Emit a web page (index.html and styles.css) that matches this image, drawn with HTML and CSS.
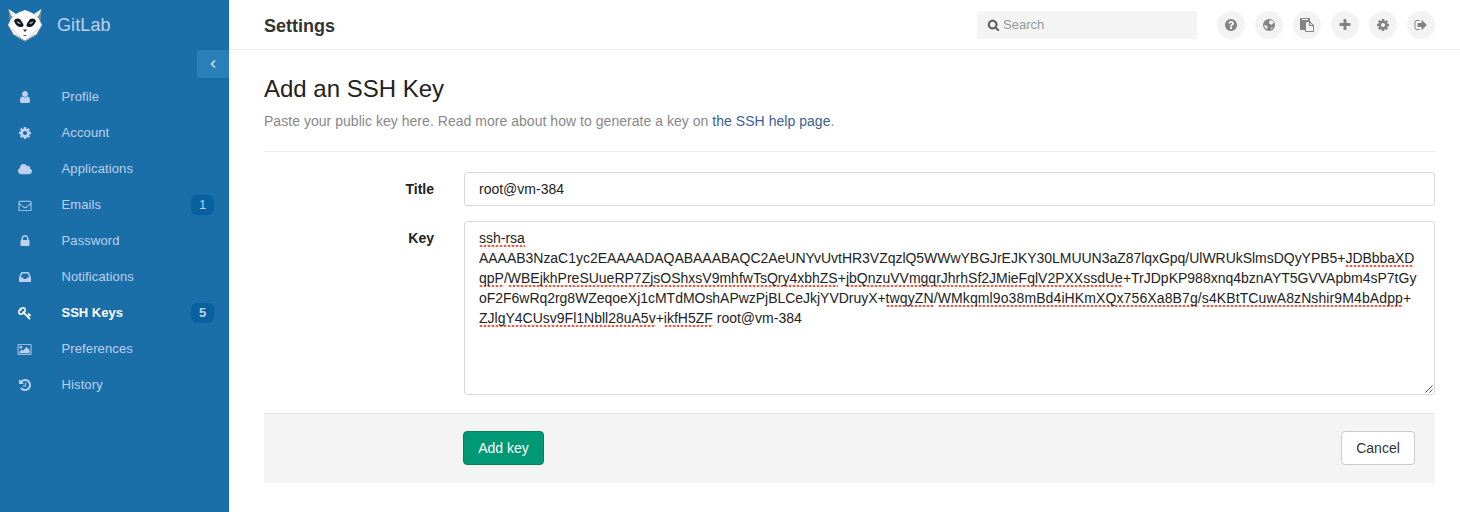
FILE: index.html
```html
<!DOCTYPE html>
<html lang="en">
<head>
<meta charset="utf-8">
<title>Add an SSH Key</title>
<link rel="stylesheet" href="styles.css">
</head>
<body>
<div class="app">
<aside class="sidebar">
  <div class="brand">
    <svg class="logo" viewBox="0 0 36 34"><path d="M1.500 1 8 6 4.500 11 2.500 13ZM34.500 1 28 6 31.500 11 33.500 13Z" fill="#7c8990"/><path d="M1.500 1 9 6 5.500 9 4 7ZM34.500 1 27 6 30.500 9 32 7Z" fill="#f4f6f7"/><path d="M18 2Q12 4 8 6.500L4 11 1 17 6 26.500 18 33.500 30 26.500 35 17 32 11 28 6.500Q24 4 18 2Z" fill="#fff"/><path d="M1 17.500 6.500 26.500 18 33 29.500 26.500 35 17.500" fill="none" stroke="#69777f" stroke-width=".9"/><path d="M5 21 10 25.500 15 31.500M31 21 26 25.500 21 31.500" fill="none" stroke="#aab3b8" stroke-width=".7"/><path d="M7 13q1.500-3.500 6-2l3 4.500q1.500 3-1.500 3.500-5 .5-7.500-6ZM29 13q-1.500-3.500-6-2l-3 4.500q-1.500 3 1.500 3.500 5 .5 7.500-6Z" fill="#14191d"/><path d="M9.500 13.500q3-.5 4.500 2.500-3 .5-4.500-2.500ZM26.500 13.500q-3-.5-4.500 2.500 3 .5 4.500-2.500Z" fill="#a7b1b6"/><path d="M16 21.500h4L18 24Z" fill="#252a2e"/><path d="M16.500 27h3v1h-3Z" fill="#555"/></svg>
    <span>GitLab</span>
  </div>
  <div class="collapse"><svg viewBox="0 0 8 10"><path d="M6 1.500 2.500 5l3.500 3.500" fill="none" stroke="#dce9f3" stroke-width="1.500"/></svg></div>
  <nav class="nav">
    <a class="item"><svg class="ico" viewBox="0 0 1792 1792"><path d="M1536 1399q0 109-62.500 187t-150.500 78h-854q-88 0-150.500-78t-62.500-187q0-85 8.500-160.500t31.500-152 58.500-131 94-89 134.500-34.500q131 128 313 128t313-128q76 0 134.500 34.500t94 89 58.500 131 31.500 152 8.500 160.500zm-256-887q0 159-112.500 271.500t-271.500 112.500-271.500-112.500-112.500-271.500 112.500-271.500 271.500-112.500 271.500 112.500 112.500 271.500z"/></svg><span>Profile</span></a>
    <a class="item"><svg class="ico" viewBox="0 0 1792 1792"><path id="cog" d="M1152 896q0-106-75-181t-181-75-181 75-75 181 75 181 181 75 181-75 75-181zm512-109v222q0 12-8 23t-20 13l-185 28q-19 54-39 91 35 50 107 138 10 12 10 25t-9 23q-27 37-99 108t-94 71q-12 0-26-9l-138-108q-44 23-91 38-16 136-29 186-7 28-36 28h-222q-14 0-24.500-8.500t-11.500-21.500l-28-184q-49-16-90-37l-141 107q-10 9-25 9-14 0-25-11-126-114-165-168-7-10-7-23 0-12 8-23 15-21 51-66.500t54-70.500q-27-50-41-99l-183-27q-13-2-21-12.500t-8-23.500v-222q0-12 8-23t19-13l186-28q14-46 39-92-40-57-107-138-10-12-10-24 0-10 9-23 26-36 98.500-107.500t94.500-71.500q13 0 26 10l138 107q44-23 91-38 16-136 29-186 7-28 36-28h222q14 0 24.500 8.500t11.500 21.500l28 184q49 16 90 37l142-107q9-9 24-9 13 0 25 10 129 119 165 170 7 8 7 22 0 12-8 23-15 21-51 66.500t-54 70.500q26 50 41 98l183 28q13 2 21 12.500t8 23.500z"/></svg><span>Account</span></a>
    <a class="item"><svg class="ico wide" viewBox="0 0 2048 1792"><path d="M1984 1152q0 159-112.500 271.500t-271.500 112.500h-1088q-185 0-316.500-131.500t-131.500-316.500q0-132 71-241.500t187-163.500q-2-28-2-43 0-212 150-362t362-150q158 0 286.500 88t187.500 230q70-62 166-62 106 0 181 75t75 181q0 75-41 138 129 30 213 134.500t84 239.500z"/></svg><span>Applications</span></a>
    <a class="item"><svg class="ico wide" viewBox="0 0 1792 1792"><path d="M1664 1504v-768q-32 36-69 66-268 206-426 338-51 43-83 67t-86.500 48.500-102.500 24.500h-2q-48 0-102.500-24.500t-86.500-48.500-83-67q-158-132-426-338-37-30-69-66v768q0 13 9.500 22.500t22.500 9.500h1472q13 0 22.500-9.500t9.500-22.500zm0-1051v-24.500l-.5-13-3-12.500-5.500-9-9-7.500-14-2.500h-1472q-13 0-22.500 9.500t-9.500 22.500q0 168 147 284 193 152 401 317 6 5 35 29.500t46 37.500 44.500 31.500 50.500 27.500 43 9h2q20 0 43-9t50.500-27.500 44.500-31.500 46-37.500 35-29.500q208-165 401-317 54-43 100.500-115.500t46.500-131.500zm128-37v1088q0 66-47 113t-113 47h-1472q-66 0-113-47t-47-113v-1088q0-66 47-113t113-47h1472q66 0 113 47t47 113z"/></svg><span>Emails</span><b class="count">1</b></a>
    <a class="item"><svg class="ico" viewBox="0 0 1792 1792"><path d="M640 768h512v-192q0-106-75-181t-181-75-181 75-75 181v192zm832 96v576q0 40-28 68t-68 28h-960q-40 0-68-28t-28-68v-576q0-40 28-68t68-28h32v-192q0-184 132-316t316-132 316 132 132 316v192h32q40 0 68 28t28 68z"/></svg><span>Password</span></a>
    <a class="item"><svg class="ico" viewBox="0 0 1792 1792"><path d="M1151 960h316q-1-3-2.500-8t-2.500-8l-212-496h-708l-212 496q-1 2-2.500 8t-2.500 8h316l95 192h320zm513 30v482q0 26-19 45t-45 19h-1408q-26 0-45-19t-19-45v-482q0-62 25-123l238-552q10-25 36.500-42t52.500-17h832q26 0 52.500 17t36.500 42l238 552q25 61 25 123z"/></svg><span>Notifications</span></a>
    <a class="item active"><svg class="ico" viewBox="0 0 1792 1792"><path d="M832 512q0-80-56-136t-136-56-136 56-56 136q0 42 19 83-41-19-83-19-80 0-136 56t-56 136 56 136 136 56 136-56 56-136q0-42-19-83 41 19 83 19 80 0 136-56t56-136zm851 704q0 17-49 66t-66 49q-9 0-28.500-16t-36.500-33-38.500-40-24.500-26l-96 96 220 220q28 28 28 68 0 42-39 81t-81 39q-40 0-68-28l-671-671q-176 131-365 131-163 0-265.500-102.500t-102.500-265.500q0-160 95-313t248-248 313-95q163 0 265.500 102.500t102.500 265.500q0 189-131 365l355 355 96-96q-3-3-26-24.500t-40-38.500-33-36.500-16-28.500q0-17 49-66t66-49q13 0 23 10 6 6 46 44.500t82 79.500 86.500 86 73 78 28.500 41z"/></svg><span>SSH Keys</span><b class="count">5</b></a>
    <a class="item"><svg class="ico wide" viewBox="0 0 1920 1792"><path d="M576 576q0 80-56 136t-136 56-136-56-56-136 56-136 136-56 136 56 56 136zm1024 384v448h-1408v-192l320-320 160 160 512-512zm96-704h-1600q-13 0-22.500 9.500t-9.500 22.500v1216q0 13 9.500 22.500t22.500 9.500h1600q13 0 22.500-9.500t9.500-22.500v-1216q0-13-9.500-22.500t-22.500-9.500zm160 32v1216q0 66-47 113t-113 47h-1600q-66 0-113-47t-47-113v-1216q0-66 47-113t113-47h1600q66 0 113 47t47 113z"/></svg><span>Preferences</span></a>
    <a class="item"><svg class="ico" viewBox="0 0 1792 1792"><path d="M1664 896q0 156-61 298t-164 245-245 164-298 61q-172 0-327-72.500t-264-204.500q-7-10-6.500-22.500t8.500-20.500l137-138q10-9 25-9 16 2 23 12 73 95 179 147t225 52q104 0 198.500-40.500t163.500-109.500 109.500-163.500 40.500-198.500-40.500-198.500-109.500-163.500-163.500-109.500-198.500-40.500q-98 0-188 35.500t-160 101.500l137 138q31 30 14 69-17 40-59 40h-448q-26 0-45-19t-19-45v-448q0-42 40-59 39-17 69 14l130 129q107-101 244.500-156.500t284.500-55.500q156 0 298 61t245 164 164 245 61 298zm-640-288v448q0 14-9 23t-23 9h-320q-14 0-23-9t-9-23v-64q0-14 9-23t23-9h224v-352q0-14 9-23t23-9h64q14 0 23 9t9 23z"/></svg><span>History</span></a>
  </nav>
</aside>
<div class="page">
  <header class="topbar">
    <h1 class="heading">Settings</h1>
    <div class="search"><svg viewBox="0 0 1792 1792"><path d="M1216 832q0-185-131.500-316.500t-316.500-131.500-316.500 131.500-131.500 316.500 131.500 316.500 316.500 131.500 316.500-131.500 131.500-316.500zm512 832q0 52-38 90t-90 38q-54 0-90-38l-343-342q-179 124-399 124-143 0-273.500-55.500t-225-150-150-225-55.500-273.500 55.500-273.500 150-225 225-150 273.500-55.500 273.500 55.500 225 150 150 225 55.500 273.500q0 220-124 399l343 343q37 37 37 90z"/></svg><span>Search</span></div>
    <div class="actions">
      <a class="round"><svg viewBox="0 0 1792 1792"><path d="M1024 1376v-192q0-14-9-23t-23-9h-192q-14 0-23 9t-9 23v192q0 14 9 23t23 9h192q14 0 23-9t9-23zm256-672q0-88-55.500-163t-138.500-116-170-41q-243 0-371 213-15 24 8 42l132 100q7 6 19 6 16 0 25-12 53-68 86-92 34-24 86-24 48 0 85.500 26t37.500 59q0 38-20 61t-68 45q-63 28-115.500 86.500t-52.500 125.500v36q0 14 9 23t23 9h192q14 0 23-9t9-23q0-19 21.500-49.500t54.500-49.500q32-18 49-28.500t46-35 44.500-48 28-60.500 12.500-81zm384 192q0 209-103 385.500t-279.500 279.500-385.500 103-385.500-103-279.500-279.500-103-385.500 103-385.500 279.500-279.500 385.500-103 385.500 103 279.500 279.500 103 385.500z"/></svg></a>
      <a class="round"><svg viewBox="0 0 14 14"><circle cx="7" cy="7" r="6"/><path d="M8 2.200 10.500 2.800 12 5 11 5.200 9.800 7 8.300 6 6.800 5.700 7.600 4.600 7 3.500ZM2 6.500 3.800 7.600 5.800 8.600 5.200 10.300 4.800 11.500 2.900 9.500ZM9.300 9.700 11 9 10 10.800 8.600 11.400Z" fill="#f3f3f3"/></svg></a>
      <a class="round"><svg viewBox="0 0 1792 1792"><path d="M768 1664h896v-640h-416q-40 0-68-28t-28-68v-416h-384v1152zm256-1440v-64q0-13-9.500-22.500t-22.500-9.500h-704q-13 0-22.500 9.500t-9.500 22.500v64q0 13 9.500 22.500t22.500 9.500h704q13 0 22.500-9.500t9.500-22.500zm256 672h299l-299-299v299zm512 128v672q0 40-28 68t-68 28h-960q-40 0-68-28t-28-68v-160h-544q-40 0-68-28t-28-68v-1344q0-40 28-68t68-28h1088q40 0 68 28t28 68v328q21 13 36 28l408 408q28 28 48 76t20 88z"/></svg></a>
      <a class="round"><svg viewBox="0 0 1792 1792"><path d="M1600 736v192q0 40-28 68t-68 28h-416v416q0 40-28 68t-68 28h-192q-40 0-68-28t-28-68v-416h-416q-40 0-68-28t-28-68v-192q0-40 28-68t68-28h416v-416q0-40 28-68t68-28h192q40 0 68 28t28 68v416h416q40 0 68 28t28 68z"/></svg></a>
      <a class="round"><svg viewBox="0 0 1792 1792"><use href="#cog"/></svg></a>
      <a class="round"><svg viewBox="0 0 1792 1792"><path d="M704 1440q0 4 1 20t.5 26.500-3 23.500-10 19.500-20.500 6.500h-320q-119 0-203.500-84.500t-84.500-203.500v-704q0-119 84.500-203.500t203.500-84.500h320q13 0 22.500 9.500t9.500 22.500q0 4 1 20t.5 26.500-3 23.500-10 19.500-20.500 6.500h-320q-66 0-113 47t-47 113v704q0 66 47 113t113 47h312l11.500 1 11.500 3 8 5.500 7 9 2 13.500zm928-544q0 26-19 45l-544 544q-19 19-45 19t-45-19-19-45v-288h-448q-26 0-45-19t-19-45v-384q0-26 19-45t45-19h448v-288q0-26 19-45t45-19 45 19l544 544q19 19 19 45z"/></svg></a>
    </div>
  </header>
  <main class="content">
    <h2 class="title">Add an SSH Key</h2>
    <p class="lead">Paste your public key here. Read more about how to generate a key on <a>the SSH help page</a>.</p>
    <div class="row">
      <label>Title</label>
      <div class="field">root@vm-384</div>
    </div>
    <div class="row">
      <label>Key</label>
      <div class="field area">
        <div class="line"><u>ssh-rsa</u></div>
        <div class="line tight">AAAAB3NzaC1yc2EAAAADAQABAAABAQC2AeUNYvUvtHR3VZqzlQ5WWwYBGJrEJKY30LMUUN3aZ87lqxGpq/UlWRUkSlmsDQyYPB5+<u>JDBbbaXD</u></div>
        <div class="line"><u>qpP</u>/<u>WBEjkhPreSUueRP7ZjsOShxsV9mhfwTsQry4xbhZS</u>+<u>jbQnzuVVmgqrJhrhSf2JMieFqlV2PXXssdUe</u>+TrJDpKP988xnq4bznAYT5GVVApbm4sP7tGy</div>
        <div class="line"><span class="tight">oF2F6wRq2rg8WZeqoeXj1cMTdMOshAPwzPjBLCeJkjYVDruyX+</span><span class="loose"><u>twqyZN</u>/<u>WMkqml9o38mBd4iHKmXQx756Xa8B7g</u>/<u>s4KBtTCuwA8zNshir9M4bAdpp</u>+</span></div>
        <div class="line"><u>ZJlgY4CUsv9Fl1Nbll28uA5v</u>+<u>ikfH5ZF</u> root@vm-384</div>
        <svg class="grip" viewBox="0 0 8 8"><path d="M0.500 7.500 7.500 0.500M4.500 7.500 7.500 4.500" stroke="#555" fill="none"/></svg>
      </div>
    </div>
    <div class="footer"><button class="btn save">Add key</button><button class="btn">Cancel</button></div>
  </main>
</div>
</div>
</body>
</html>
```

FILE: styles.css
```css
* { box-sizing: border-box; }
body { margin: 0; background: #fff; color: #222; font: 14px/20px "Liberation Sans", Arial, sans-serif; }
h1, h2, p { margin: 0; font-weight: 400; }
svg { display: block; flex: none; }
.app { display: flex; height: 512px; overflow: hidden; }
.sidebar { flex: none; width: 229px; background: #1a6fa9; color: #bed1f0; display: flex; flex-direction: column; }
.brand { display: flex; align-items: center; height: 50px; padding-left: 7px; font-size: 18px; letter-spacing: .1px; }
.logo { width: 36px; height: 34px; margin-right: 14px; }
.collapse { align-self: flex-end; width: 32px; height: 28px; background: #2980b9; display: flex; align-items: center; justify-content: center; }
.collapse svg { width: 8px; height: 10px; }
.nav { display: flex; flex-direction: column; font-size: 13px; padding-top: 1px; }
.item { display: flex; align-items: center; height: 36px; padding: 0 15px 0 17px; }
.item span { flex: 1; margin-left: 28.5px; letter-spacing: .12px; }
.ico { width: 16px; height: 14px; fill: currentColor; }
.wide { height: 13px; }
.item.active span { letter-spacing: 0; }
.active { color: #fff; font-weight: 700; }
.count { width: 23px; height: 20px; border-radius: 6px; background: #09609e; color: #bed1f0; text-align: center; font-weight: inherit; }
.page { flex: 1; min-width: 0; }
.topbar { display: flex; align-items: center; height: 50px; border-bottom: 1px solid #eee; padding: 0 25px 0 35px; }
.heading { flex: 1; font-size: 18px; font-weight: 700; color: #333; padding-top: 2px; }
.search { display: flex; align-items: center; width: 220px; height: 28px; border-radius: 3px; background: #f4f4f4; color: #999; padding-left: 10px; font-size: 13px; }
.search svg { width: 13px; height: 12px; fill: #555; stroke: #555; stroke-width: 40; margin-right: 3px; }
.actions { display: flex; gap: 10px; margin-left: 20px; }
.round { width: 28px; height: 28px; border-radius: 50%; background: #f3f3f3; display: flex; align-items: center; justify-content: center; }
.round svg { width: 14px; height: 14px; fill: #848484; }
.content { padding: 22px 25px 0 35px; }
.title { font-size: 24px; line-height: 34px; color: #222; }
.lead { color: #888; padding: 5px 0 20px; border-bottom: 1px solid #eee; margin-bottom: 20px; letter-spacing: .035px; }
.lead a { color: #3b5f92; }
.row { display: flex; margin-bottom: 15px; }
.row label { width: 170px; margin-right: 30px; padding-top: 7px; text-align: right; font-weight: 700; }
.field { position: relative; flex: 1; height: 34px; border: 1px solid #d9d9d9; border-radius: 3px; padding: 6px 14px; }
.area { height: 174px; }
.line { white-space: nowrap; }
.tight { letter-spacing: -.03px; }
.loose { letter-spacing: .11px; }
.line u { text-decoration: none; padding-bottom: 1px; background: radial-gradient(circle at 2px 1px, #f4583f 1.200px, transparent 1.700px) 0 100% / 4px 2px repeat-x; }
.grip { position: absolute; right: 1px; bottom: 1px; width: 8px; height: 8px; }
.footer { display: flex; justify-content: space-between; height: 70px; margin-top: 18px; padding: 17px 20px 0 199px; background: #f4f4f4; border-top: 1px solid #e5e5e5; }
.btn { height: 34px; width: 74px; border: 1px solid #ccc; border-radius: 4px; background: #fff; color: #333; font: inherit; padding: 0; }
.save { width: 81px; background: #019875; border-color: #01805f; color: #fff; }
```
